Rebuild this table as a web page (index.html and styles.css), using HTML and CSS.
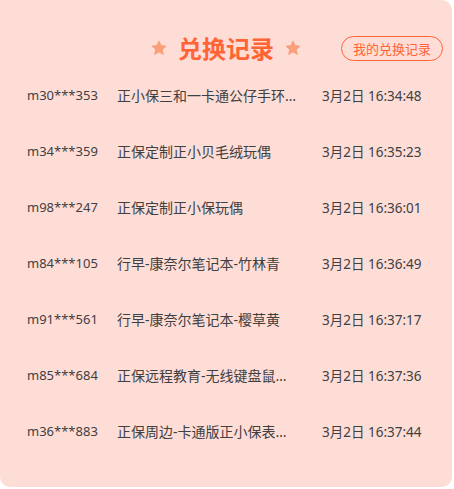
FILE: index.html
```html
<!DOCTYPE html>
<html lang="zh">
<head>
<meta charset="utf-8">
<link rel="stylesheet" href="styles.css">
</head>
<body>
<div class="card">
  <div class="header">
    <div></div>
    <div class="title">
      <svg class="star" viewBox="0 0 24 24"><path d="M12 1.5l3.1 6.9 7.4.8-5.6 5 1.6 7.4L12 17.8l-6.5 3.8 1.6-7.4-5.6-5 7.4-.8z" stroke="#F9A07A" stroke-width="1.5" stroke-linejoin="round"/></svg>
      <span class="title-text">兑换记录</span>
      <svg class="star" viewBox="0 0 24 24"><path d="M12 1.5l3.1 6.9 7.4.8-5.6 5 1.6 7.4L12 17.8l-6.5 3.8 1.6-7.4-5.6-5 7.4-.8z" stroke="#F9A07A" stroke-width="1.5" stroke-linejoin="round"/></svg>
    </div>
    <div class="btn-wrap"><span class="btn">我的兑换记录</span></div>
  </div>
  <div class="list">
    <div class="row"><span class="user">m30***353</span><span class="item">正小保三和一卡通公仔手环手环</span><span class="time">3月2日 16:34:48</span></div>
    <div class="row"><span class="user">m34***359</span><span class="item">正保定制正小贝毛绒玩偶</span><span class="time">3月2日 16:35:23</span></div>
    <div class="row"><span class="user">m98***247</span><span class="item">正保定制正小保玩偶</span><span class="time">3月2日 16:36:01</span></div>
    <div class="row"><span class="user">m84***105</span><span class="item">行早-康奈尔笔记本-竹林青</span><span class="time">3月2日 16:36:49</span></div>
    <div class="row"><span class="user">m91***561</span><span class="item">行早-康奈尔笔记本-樱草黄</span><span class="time">3月2日 16:37:17</span></div>
    <div class="row"><span class="user">m85***684</span><span class="item">正保远程教育-无线键盘鼠标套装</span><span class="time">3月2日 16:37:36</span></div>
    <div class="row"><span class="user">m36***883</span><span class="item">正保周边-卡通版正小保表情包</span><span class="time">3月2日 16:37:44</span></div>
  </div>
</div>
</body>
</html>
```
FILE: styles.css
```css
html, body {
  margin: 0;
  padding: 0;
  background: #fff;
}
body {
  font-family: "Noto Sans", "Noto Sans CJK SC", sans-serif;
}
.card {
  width: 452px;
  height: 487px;
  background: #FFDDD7;
  border-radius: 0 10px 10px 10px;
  box-sizing: border-box;
}
.header {
  height: 67px;
  display: grid;
  grid-template-columns: 1fr auto 1fr;
  align-items: center;
  padding-top: 29px;
  box-sizing: border-box;
  align-content: start;
}
.title {
  display: flex;
  align-items: center;
  gap: 11px;
  height: 38px;
}
.title-text {
  font-family: "Noto Sans CJK SC", sans-serif;
  font-size: 24px;
  font-weight: 700;
  color: #FF6434;
  line-height: 38px;
}
.star {
  width: 16px;
  height: 16px;
  fill: #F9A07A;
}
.btn-wrap {
  display: flex;
  justify-content: flex-end;
  padding-right: 9px;
}
.btn {
  display: inline-flex;
  align-items: center;
  height: 23px;
  padding: 0 11px;
  border: 1px solid #FF6434;
  border-radius: 13px;
  font-family: "Noto Sans CJK SC", sans-serif;
  font-size: 13px;
  color: #FF6434;
  line-height: 1;
}
.list {
  display: flex;
  flex-direction: column;
}
.row {
  height: 56px;
  display: flex;
  align-items: center;
  padding-left: 27px;
  font-size: 14px;
  color: #404040;
}
.user {
  width: 90px;
  flex: none;
  font-size: 13px;
}
.item {
  width: 182px;
  flex: none;
  white-space: nowrap;
  overflow: hidden;
  text-overflow: ellipsis;
  margin-right: 23px;
}
.time {
  flex: none;
  font-size: 13.5px;
}
```
